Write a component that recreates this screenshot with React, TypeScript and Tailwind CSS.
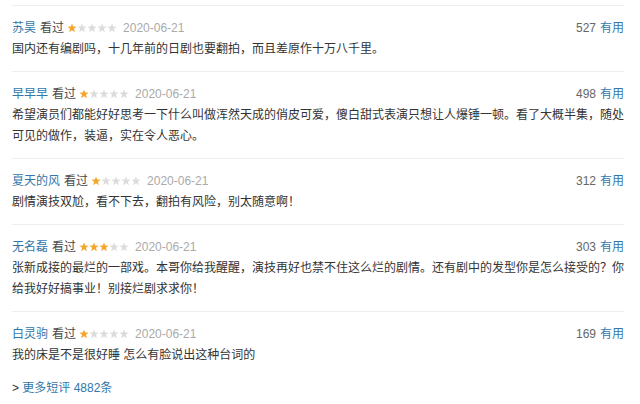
import React from 'react';

type Review = {
  name: string;
  rating: number;
  date: string;
  votes: number;
  text: string;
};

const reviews: Review[] = [
  {
    name: '苏昊',
    rating: 1,
    date: '2020-06-21',
    votes: 527,
    text: '国内还有编剧吗，十几年前的日剧也要翻拍，而且差原作十万八千里。',
  },
  {
    name: '早早早',
    rating: 1,
    date: '2020-06-21',
    votes: 498,
    text: '希望演员们都能好好思考一下什么叫做浑然天成的俏皮可爱，傻白甜式表演只想让人爆锤一顿。看了大概半集，随处可见的做作，装逼，实在令人恶心。',
  },
  {
    name: '夏天的风',
    rating: 1,
    date: '2020-06-21',
    votes: 312,
    text: '剧情演技双尬，看不下去，翻拍有风险，别太随意啊！',
  },
  {
    name: '无名磊',
    rating: 3,
    date: '2020-06-21',
    votes: 303,
    text: '张新成接的最烂的一部戏。本哥你给我醒醒，演技再好也禁不住这么烂的剧情。还有剧中的发型你是怎么接受的？你给我好好搞事业！别接烂剧求求你！',
  },
  {
    name: '白灵驹',
    rating: 1,
    date: '2020-06-21',
    votes: 169,
    text: '我的床是不是很好睡 怎么有脸说出这种台词的',
  },
];

function Star({ filled }: { filled: boolean }) {
  return (
    <svg width="10" height="10" viewBox="0 0 10 10">
      <path
        d="M5 0.4 L6.2 3.6 L9.6 3.7 L6.9 5.8 L7.9 9.2 L5 7.2 L2.1 9.2 L3.1 5.8 L0.4 3.7 L3.8 3.6 Z"
        fill={filled ? '#f4a62a' : '#dcdcdc'}
      />
    </svg>
  );
}

function Stars({ rating }: { rating: number }) {
  return (
    <span className="flex items-center">
      {[1, 2, 3, 4, 5].map((i) => (
        <Star key={i} filled={i <= rating} />
      ))}
    </span>
  );
}

export default function App() {
  return (
    <div
      className="w-[640px] h-[404px] bg-white overflow-hidden pt-[5px] text-[12px] text-[#333]"
      style={{ fontFamily: '"Liberation Sans", "Noto Sans CJK SC", sans-serif' }}
    >
      <div className="mx-3 w-[612px]">
        {reviews.map((r, idx) => (
          <div
            key={r.name}
            className={`border-t border-[#efefef] pt-[10px] ${idx === reviews.length - 1 ? 'pb-0' : 'pb-[11px]'}`}
          >
            <div className="flex items-center justify-between h-[23px]">
              <div className="flex items-center">
                <span className="text-[#3377aa]">{r.name}</span>
                <span className="ml-[4px] text-[#494949]">看过</span>
                <span className="ml-[3px]">
                  <Stars rating={r.rating} />
                </span>
                <span className="ml-[6px] text-[#aaaaaa]">{r.date}</span>
              </div>
              <div className="flex items-center">
                <span className="text-[#666]">{r.votes}</span>
                <span className="ml-[4px] text-[#3377aa]">有用</span>
              </div>
            </div>
            <p className="leading-[21px] text-[#333]">{r.text}</p>
          </div>
        ))}
        <div className="mt-[12px] leading-[21px]">
          <span className="text-[#333]">&gt; </span>
          <span className="text-[#3377aa]">更多短评 4882条</span>
        </div>
      </div>
    </div>
  );
}
